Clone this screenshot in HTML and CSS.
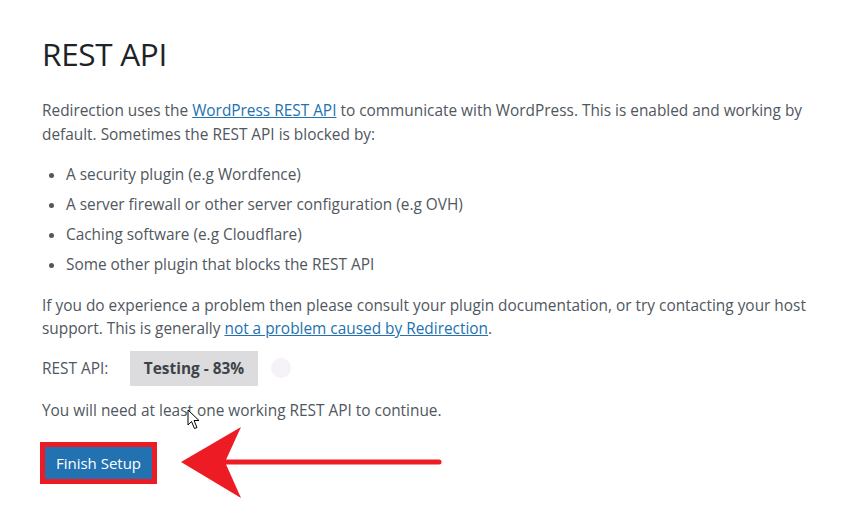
FILE: index.html
```html
<!DOCTYPE html>
<html>
<head>
<meta charset="utf-8">
<link rel="stylesheet" href="styles.css">
</head>
<body>
<div class="page">
  <h1 class="title">REST API</h1>
  <p class="text">Redirection uses the <a class="link" href="#">WordPress REST API</a> to communicate with WordPress. This is enabled and working by default. Sometimes the REST API is blocked by:</p>
  <ul class="list">
    <li>A security plugin (e.g Wordfence)</li>
    <li>A server firewall or other server configuration (e.g OVH)</li>
    <li>Caching software (e.g Cloudflare)</li>
    <li>Some other plugin that blocks the REST API</li>
  </ul>
  <p class="text text-tight">If you do experience a problem then please consult your plugin documentation, or try contacting your host support. This is generally <a class="link" href="#">not a problem caused by Redirection</a>.</p>
  <div class="status">
    <span class="status-label">REST API:</span>
    <span class="badge">Testing - 83%</span>
    <span class="spinner"></span>
  </div>
  <p class="text note">You will need at least one working REST API to continue.<svg class="cursor" width="14" height="21" viewBox="0 0 14 21"><path d="M1 1 L1 16 L4.5 12.5 L7.5 19.5 L10 18.5 L7 11.5 L12 11.5 Z" fill="#fff" stroke="#000" stroke-width="1" stroke-linejoin="miter"/></svg></p>
  <div class="actions">
    <span class="highlight"><button class="button">Finish Setup</button></span>
    <svg class="arrow" width="262" height="74" viewBox="0 0 262 74"><path d="M0 36 L60 1 L44 36 L60 72 Z" fill="#ed1c24"/><line x1="40" y1="36" x2="258" y2="36" stroke="#ed1c24" stroke-width="5" stroke-linecap="round"/></svg>
  </div>
</div>
</body>
</html>
```
FILE: styles.css
```css
html, body {
  margin: 0;
  padding: 0;
  background: #ffffff;
}
.page {
  padding: 28px 0 0 42px;
  width: 790px;
  font-family: "Open Sans", "Noto Sans", sans-serif;
  color: #50575e;
  font-size: 15.4px;
}
.title {
  margin: 0 0 19px 0;
  font-size: 31.5px;
  font-weight: 400;
  color: #1d2327;
  line-height: 52px;
  letter-spacing: -0.3px;
}
.text {
  margin: 0 0 17px 0;
  line-height: 23.5px;
}
.text-tight {
  margin-bottom: 10px;
}
.link {
  color: #2271b1;
  text-decoration: underline;
}
.list {
  margin: 0 0 17px 0;
  padding: 0 0 0 24px;
  list-style: disc;
}
.list li {
  line-height: 23.5px;
  margin-bottom: 6.5px;
}
.status {
  display: flex;
  align-items: center;
  margin: 0 0 13px 0;
}
.status-label {
  width: 88px;
}
.badge {
  background: #dcdcde;
  color: #3c434a;
  font-weight: 700;
  padding: 0 13px;
  height: 35px;
  width: 102px;
  display: flex;
  align-items: center;
  justify-content: center;
}
.spinner {
  width: 20px;
  height: 20px;
  border-radius: 50%;
  background: #f4f2f6;
  margin-left: 13px;
}
.note {
  position: relative;
  margin-bottom: 4px;
}
.cursor {
  position: absolute;
  left: 145px;
  top: 10px;
}
.actions {
  display: flex;
  align-items: center;
  gap: 24px;
}
.highlight {
  display: inline-flex;
  border: 4px solid #ec1c24;
  padding: 1px;
  background: #ec1c24;
  margin-left: -2px;
}
.button {
  background: #2271b1;
  color: #ffffff;
  border: 0;
  border-radius: 0;
  font-family: "Open Sans", "Noto Sans", sans-serif;
  font-size: 15px;
  padding: 0 10px;
  height: 32px;
  width: 107px;
  line-height: 32px;
  cursor: pointer;
}
.arrow {
  display: block;
}
```
